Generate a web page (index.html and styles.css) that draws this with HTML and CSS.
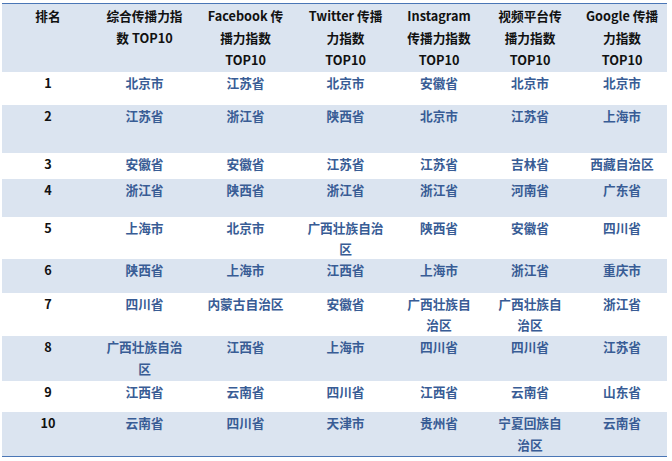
FILE: index.html
```html
<!DOCTYPE html>
<html lang="zh">
<head>
<meta charset="utf-8">
<title>传播力指数</title>
<link rel="stylesheet" href="styles.css">
</head>
<body>
<div class="wrap">
<table class="rank">
<colgroup>
<col class="c1"><col class="c2"><col class="c3"><col class="c4"><col class="c5"><col class="c6"><col class="c7">
</colgroup>
<thead>
<tr class="r0">
<th>排名</th>
<th>综合传播力指<br>数 TOP10</th>
<th>Facebook 传<br>播力指数<br>TOP10</th>
<th>Twitter 传播<br>力指数<br>TOP10</th>
<th>Instagram<br>传播力指数<br>TOP10</th>
<th>视频平台传<br>播力指数<br>TOP10</th>
<th>Google 传播<br>力指数<br>TOP10</th>
</tr>
</thead>
<tbody>
<tr class="r1"><td class="n">1</td><td>北京市</td><td>江苏省</td><td>北京市</td><td>安徽省</td><td>北京市</td><td>北京市</td></tr>
<tr class="r2 alt"><td class="n">2</td><td>江苏省</td><td>浙江省</td><td>陕西省</td><td>北京市</td><td>江苏省</td><td>上海市</td></tr>
<tr class="r3"><td class="n">3</td><td>安徽省</td><td>安徽省</td><td>江苏省</td><td>江苏省</td><td>吉林省</td><td>西藏自治区</td></tr>
<tr class="r4 alt"><td class="n">4</td><td>浙江省</td><td>陕西省</td><td>浙江省</td><td>浙江省</td><td>河南省</td><td>广东省</td></tr>
<tr class="r5"><td class="n">5</td><td>上海市</td><td>北京市</td><td>广西壮族自治<br>区</td><td>陕西省</td><td>安徽省</td><td>四川省</td></tr>
<tr class="r6 alt"><td class="n">6</td><td>陕西省</td><td>上海市</td><td>江西省</td><td>上海市</td><td>浙江省</td><td>重庆市</td></tr>
<tr class="r7"><td class="n">7</td><td>四川省</td><td>内蒙古自治区</td><td>安徽省</td><td>广西壮族自<br>治区</td><td>广西壮族自<br>治区</td><td>浙江省</td></tr>
<tr class="r8 alt"><td class="n">8</td><td>广西壮族自治<br>区</td><td>江西省</td><td>上海市</td><td>四川省</td><td>四川省</td><td>江苏省</td></tr>
<tr class="r9"><td class="n">9</td><td>江西省</td><td>云南省</td><td>四川省</td><td>江西省</td><td>云南省</td><td>山东省</td></tr>
<tr class="r10 alt"><td class="n">10</td><td>云南省</td><td>四川省</td><td>天津市</td><td>贵州省</td><td>宁夏回族自<br>治区</td><td>云南省</td></tr>
</tbody>
</table>
</div>
</body>
</html>
```
FILE: styles.css
```css
html, body {
  margin: 0;
  padding: 0;
  background: #ffffff;
}
.wrap {
  padding: 3px 0 0 2px;
}
.rank {
  width: 665px;
  table-layout: fixed;
  border-collapse: collapse;
  border-top: 1.5px solid #4a76b6;
  border-bottom: 1.5px solid #4a76b6;
  font-family: "Noto Sans CJK SC", "Noto Sans", sans-serif;
  font-size: 12.7px;
  font-weight: 700;
  line-height: 22px;
}
.c1 { width: 92px; }
.c2 { width: 101px; }
.c3 { width: 101px; }
.c4 { width: 99px; }
.c5 { width: 88px; }
.c6 { width: 94px; }
.c7 { width: 90px; }
.rank th, .rank td {
  padding: 0;
  text-align: center;
  vertical-align: top;
}
.rank th {
  color: #111111;
  background: #dbe4f0;
  font-weight: 700;
}
.rank td {
  color: #385c95;
}
.rank td.n {
  color: #111111;
}
.alt td {
  background: #dbe4f0;
}
.r0 { height: 68px; }
.r0 th { padding-top: 1px; }
.r1 { height: 33px; }
.r2 { height: 48px; }
.r3 { height: 26px; }
.r4 { height: 38px; }
.r5 { height: 42px; }
.r5 td { line-height: 21px; }
.r6 { height: 34px; }
.r7 { height: 43px; }
.r7 td { line-height: 21.5px; }
.r8 { height: 45px; }
.r9 { height: 31px; }
.r10 { height: 45px; }
```
